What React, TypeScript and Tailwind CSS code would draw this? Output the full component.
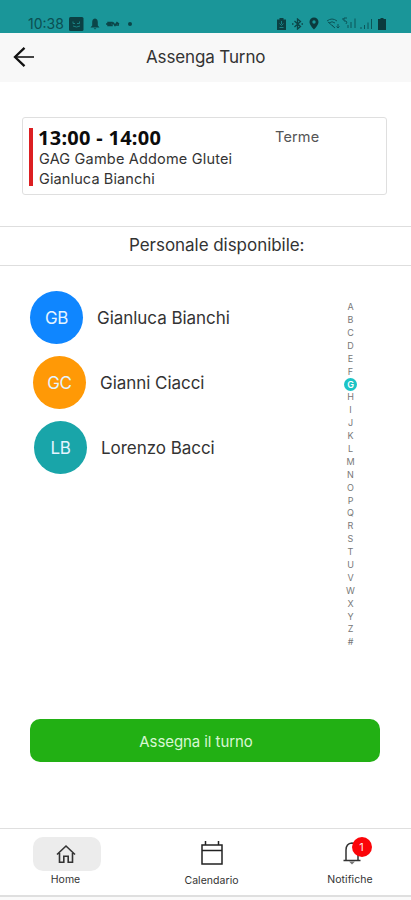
import { useState } from 'react'

const people = [
  { initials: 'GB', name: 'Gianluca Bianchi', row: 'pl-[30px]', color: 'bg-[#0f86ff]' },
  { initials: 'GC', name: 'Gianni Ciacci', row: 'pl-[33px]', color: 'bg-[#ff9906]' },
  { initials: 'LB', name: 'Lorenzo Bacci', row: 'pl-[34px]', color: 'bg-[#19a5a9]' },
]

const letters = 'ABCDEFGHIJKLMNOPQRSTUVWXYZ#'.split('')

function StatusBar() {
  return (
    <div className="flex h-[33px] items-end justify-between bg-[#1a9699] pl-[28px] pr-[25px] text-[#0b4f52]">
      <div className="flex h-[19px] items-center">
        <span className="w-[40px] text-[14px] leading-[19px]">10:38</span>
        <svg className="ml-[1px]" width="15" height="14" viewBox="0 0 15 14">
          <rect width="14.5" height="14" rx="1.500" fill="#0b4043" />
          <path d="M4 4.500v2h2M8 6.500h2.500v-2M4 9q3.500 2 7 0" fill="none" stroke="#1a8082" strokeWidth="1" />
        </svg>
        <svg className="ml-[6px]" width="10" height="12" viewBox="0 0 10 12" fill="#0b4548">
          <path d="M5 .5C2.800.8 2.200 2.500 2.200 4.500v3L.5 9.500h9l-1.700-2v-3C7.800 2.500 7.200.8 5 .5zM3.700 10.300h2.600L5 11.600z" />
        </svg>
        <svg className="ml-[6px]" width="14" height="8" viewBox="0 0 14 8" fill="none" stroke="#0b4548" strokeWidth="1.500">
          <path d="M0 4h5M2 2.500h4v3H2zM7 2.500l2 3 2-3 2 1.500M8 5h5" />
        </svg>
        <span className="ml-[8px] h-[4px] w-[4px] rounded-full bg-[#0b4548]" />
      </div>
      <div className="flex h-[19px] items-center">
        <svg width="9" height="12" viewBox="0 0 9 12">
          <path d="M2.500 0h4v1.500H9V12H0V1.500h2.500z" fill="#0b4043" />
          <path d="M4.500 3v3M2.500 5.500l2 2 2-2M2.500 9.500h4" fill="none" stroke="#1a8a8d" strokeWidth=".9" />
        </svg>
        <svg className="ml-[6px]" width="11" height="12" viewBox="0 0 11 12" fill="none" stroke="#0b4548" strokeWidth="1.300">
          <path d="M2.500 3l6 5.500-3 2.500V1l3 2.500-6 5.500M0 6h1.500M9.500 6H11" />
        </svg>
        <svg className="ml-[6px]" width="10" height="13" viewBox="0 0 10 13">
          <path fillRule="evenodd" d="M5 .5a4.500 4.500 0 0 0-4.500 4.500C.5 8 5 12.500 5 12.500S9.500 8 9.500 5A4.500 4.500 0 0 0 5 .5zm0 2.800a1.700 1.700 0 1 1 0 3.400 1.700 1.700 0 0 1 0-3.400z" fill="#0b3a3d" />
        </svg>
        <svg className="ml-[7px]" width="31" height="13" viewBox="0 0 31 13" fill="none" stroke="#0b5558" strokeWidth="1">
          <path d="M1 4q5-4 10 0M3 6q3-2.500 6 0M2 5l7 6M6 8l3 3M12 7v4M10.500 9.500L12 11l1.500-1.500M21 1h-3v3h2q1.500 1 0 3M16 2h2M22 11V8M25 11V5M29 11V1.500" />
        </svg>
        <svg className="ml-[3px]" width="13" height="12" viewBox="0 0 13 12" fill="none" stroke="#0b5558" strokeWidth="1">
          <path d="M1 11V9M4.500 11V7M8 11V4.500M11.500 11V1" />
        </svg>
        <svg className="ml-[5px]" width="8" height="12" viewBox="0 0 8 12" fill="#0b3a3d">
          <path d="M2.500 0h3v1H8v11H0V1h2.500z" />
        </svg>
      </div>
    </div>
  )
}

export default function App() {
  const [letter, setLetter] = useState('G')
  return (
    <div className="flex h-[900px] w-[411px] flex-col overflow-hidden whitespace-nowrap bg-white font-['Inter','Liberation_Sans',sans-serif] text-[#333]">
      <StatusBar />

      <header className="flex h-[49px] items-center bg-[#f8f8f8] pb-[2px] pl-[13px]">
        <svg width="22" height="22" viewBox="0 0 22 22" fill="none">
          <path d="M2 11h19" stroke="#444" strokeWidth="2" />
          <path d="M11.500 1.800L2 11l9.500 9.200" stroke="#111" strokeWidth="2.300" />
        </svg>
        <h1 className="ml-[111px] text-[17px] leading-[24px] tracking-[-0.13px]">Assenga Turno</h1>
      </header>

      <section className="mx-[22px] mt-[35px] flex h-[78px] w-[365px] rounded-[3px] border border-[#dfdfdf] pl-[6px] pt-[10px]">
        <div className="h-[58px] w-[4px] bg-[#dc1f22]" />
        <div className="-mt-px ml-[5px] w-[237px]">
          <div className="font-['Noto_Sans',sans-serif] text-[20px] font-bold leading-[21px] tracking-[0.28px] text-[#0c0c0c]">13:00 - 14:00</div>
          <div className="mt-px pl-px text-[14.500px] leading-[20px] tracking-[0.18px]">GAG Gambe Addome Glutei</div>
          <div className="pl-px text-[14.500px] leading-[20px] tracking-[0.12px]">Gianluca Bianchi</div>
        </div>
        <div className="text-[14.500px] leading-[18px] tracking-[0.15px] text-[#555]">Terme</div>
      </section>

      <div className="mt-[31px] flex h-[40px] items-center border-y border-[#dedede] pl-[129px] text-[17px] tracking-[-0.04px]">
        Personale disponibile:
      </div>

      <main className="flex h-[452px] justify-between">
        <div className="mt-[25px] flex flex-col gap-[12px]">
          {people.map((p) => (
            <div key={p.initials} className={`flex items-center ${p.row}`}>
              <div className={`flex h-[53px] w-[53px] items-center justify-center rounded-full pt-[2px] text-[17px] tracking-[-0.3px] text-[#e4f4ff] ${p.color}`}>
                {p.initials}
              </div>
              <span className="ml-[14px] pt-[2px] text-[17px] tracking-[-0.04px]">{p.name}</span>
            </div>
          ))}
        </div>
        <div className="mr-[53px] mt-[34.500px] flex w-[15px] flex-col items-center text-[9px] text-[#777]">
          {letters.map((l) => (
            <button
              key={l}
              onClick={() => setLetter(l)}
              className="flex h-[12.900px] w-[13px] items-center justify-center"
            >
              {l === letter ? (
                <span className="flex h-[13px] w-[13px] shrink-0 items-center justify-center rounded-full bg-[#1cc4c6] font-semibold text-white">{l}</span>
              ) : (
                l
              )}
            </button>
          ))}
        </div>
      </main>

      <button className="ml-[30px] mt-[1px] h-[43px] w-[350px] shrink-0 rounded-[10px] bg-[#22b014] pr-[18px] pt-[3px] text-[15px] tracking-[-0.08px] text-[#d8f7d3]">
        Assegna il turno
      </button>

      <nav className="mt-[66px] flex h-[69px] shrink-0 border-y border-b-2 border-[#dfdfdf] text-[10.500px] leading-[13px]">
        <div className="ml-[33px] flex w-[68px] flex-col items-center pt-[8px]">
          <div className="flex h-[34px] w-[68px] items-center justify-center rounded-[10px] bg-[#ececec]">
            <svg className="-ml-[2px]" width="20" height="20" viewBox="0 0 20 20" fill="none" stroke="#333" strokeWidth="1.600">
              <path d="M1 10.500L10 2l9 8.500M3.500 9v9.200h4.300v-6h4.400v6h4.300V9" />
            </svg>
          </div>
          <span className="-ml-[3px] mt-[2px]">Home</span>
        </div>
        <div className="ml-[82px] flex w-[57px] flex-col items-center pt-[12px]">
          <svg width="22" height="25" viewBox="0 0 22 25" fill="none" stroke="#222" strokeWidth="1.500">
            <path d="M1 4h20v19H1zM1 9.500h20M4.500 0v4M17.500 0v4" />
          </svg>
          <span className="mt-[8px] tracking-[0.04px]">Calendario</span>
        </div>
        <div className="ml-[86px] flex w-[48px] flex-col items-center pt-[12px]">
          <div className="relative ml-[3px]">
            <svg width="18" height="24" viewBox="0 0 18 24" fill="none" stroke="#333" strokeWidth="1.500">
              <path d="M3 19V9q0-6.500 6-7 6 .5 6 7v10M.5 19.500h17" />
              <path d="M6 20.500h6l-3 3z" fill="#777" stroke="none" />
            </svg>
            <span className="absolute -top-[4px] left-[9px] flex h-[20px] w-[20px] items-center justify-center rounded-full bg-[#fb0509] text-[11px] text-[#ffe4e4]">1</span>
          </div>
          <span className="mt-[8px] tracking-[0.05px]">Notifiche</span>
        </div>
      </nav>
      <div className="flex-1 bg-[#fafafa]" />
    </div>
  )
}
